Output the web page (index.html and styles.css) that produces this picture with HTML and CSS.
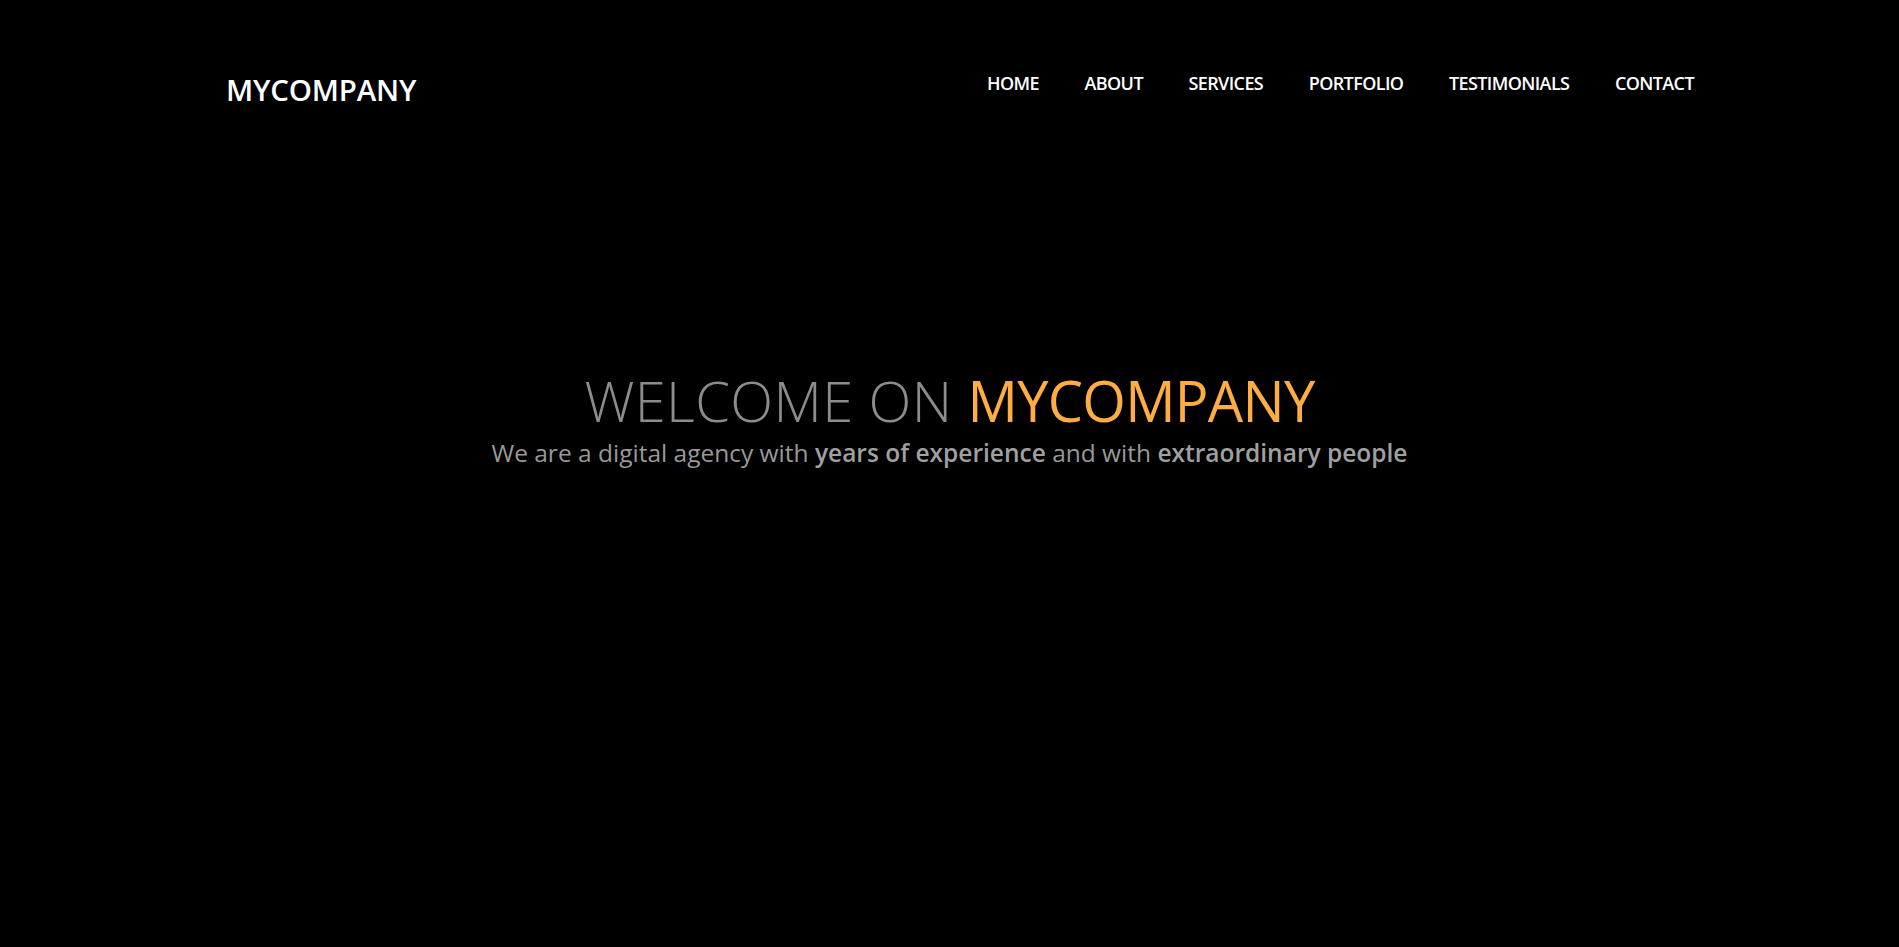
FILE: index.html
```html
<!DOCTYPE html>
<html lang="en">
<head>
<meta charset="utf-8">
<title>MyCompany</title>
<link rel="stylesheet" href="styles.css">
</head>
<body>
<header class="header">
  <div class="logo">MYCOMPANY</div>
  <nav class="nav">
    <a href="#">HOME</a>
    <a href="#">ABOUT</a>
    <a href="#">SERVICES</a>
    <a href="#">PORTFOLIO</a>
    <a href="#">TESTIMONIALS</a>
    <a href="#">CONTACT</a>
  </nav>
</header>
<section class="hero">
  <h1 class="title">WELCOME ON <span class="accent">MYCOMPANY</span></h1>
  <p class="subtitle">We are a digital agency with <strong>years of experience</strong> and with <strong>extraordinary people</strong></p>
</section>
</body>
</html>
```
FILE: styles.css
```css
* { box-sizing: border-box; }
html, body { margin: 0; padding: 0; background: #000; height: 100%; }
body { font-family: "Open Sans", "Liberation Sans", sans-serif; overflow: hidden; }
.header {
  display: flex;
  justify-content: space-between;
  align-items: flex-start;
  padding: 71px 205px 0 226px;
}
.logo {
  color: #fff;
  font-size: 29.5px;
  font-weight: 600;
  line-height: 38px;
  letter-spacing: -0.2px;
}
.nav {
  display: flex;
  gap: 45.5px;
}
.nav a {
  color: #fff;
  text-decoration: none;
  font-size: 18px;
  font-weight: 600;
  letter-spacing: -0.6px;
  line-height: 24px;
}
.hero {
  text-align: center;
  padding-top: 258px;
}
.title {
  margin: 0;
  font-size: 56px;
  font-weight: 300;
  color: #8c8c8c;
  line-height: 66px;
  letter-spacing: 0.4px;
}
.accent { color: #ffad42; font-weight: 400; letter-spacing: -0.7px; }
.subtitle {
  margin: 4px 0 0;
  font-size: 24.5px;
  color: #999;
  line-height: 32px;
}
.subtitle strong { font-weight: 600; color: #a0a0a0; }
```
